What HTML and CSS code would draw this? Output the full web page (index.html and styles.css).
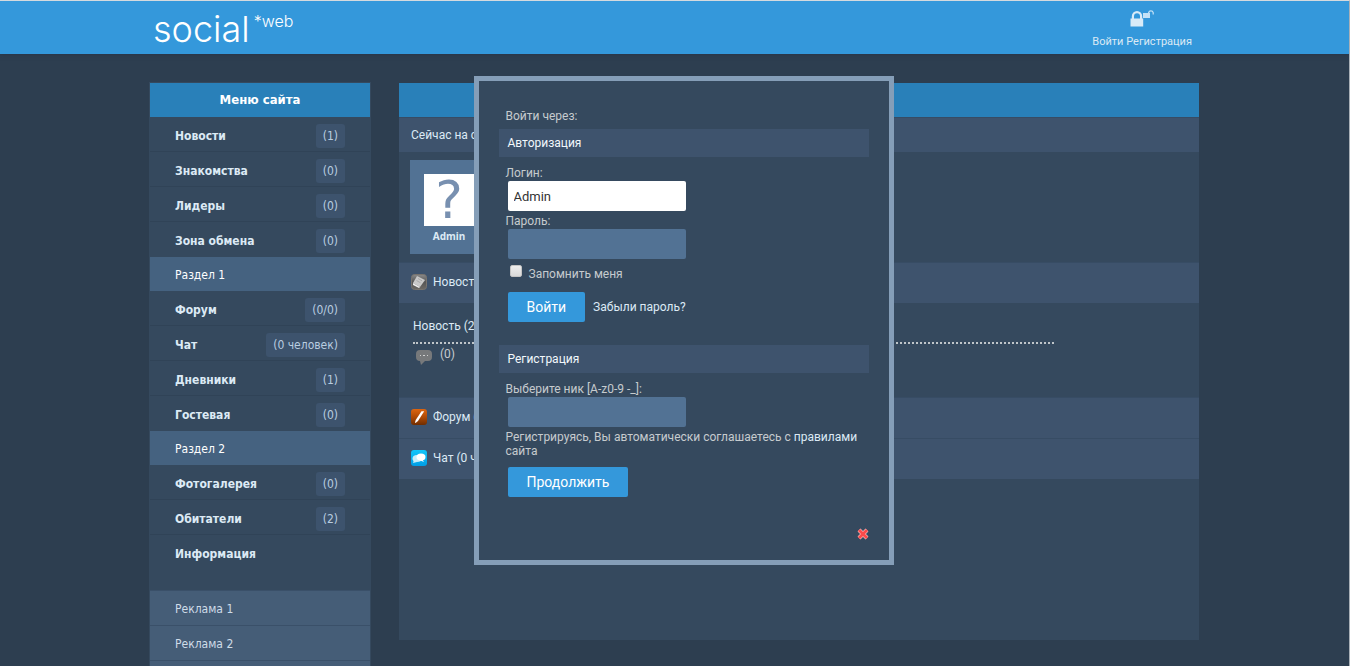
FILE: index.html
```html
<!DOCTYPE html>
<html lang="ru">
<head>
<meta charset="utf-8">
<title>social*web</title>
<link rel="stylesheet" href="styles.css">
</head>
<body class="page">
<header class="topbar">
  <div class="wrap topbar-inner">
    <a class="logo" href="#"><span class="logo-main">social</span><span class="logo-sub">*web</span></a>
    <nav class="account">
      <svg class="locks" width="24" height="20" viewBox="0 0 24 20" aria-hidden="true">
        <path d="M0.500 9.500h1.300V7.200a5.200 5.200 0 0 1 10.400 0v2.300h1v8H.5zM4 9.500h6V7.200a3 3 0 0 0-6 0z" fill="#d9ebf8" fill-rule="evenodd"/>
        <path d="M13 4h5V3.600a3 3 0 0 1 5.800 0v1.900h-1.200V3.800a1.700 1.700 0 0 0-3.300 0V4h.7v5h-7z" fill="#c4e2f7"/>
      </svg>
      <span><a href="#">Войти</a> <a href="#">Регистрация</a></span>
    </nav>
  </div>
</header>
<div class="wrap layout">
  <aside class="sidebar">
    <h2 class="side-title">Меню сайта</h2>
    <ul class="menu">
      <li><a href="#">Новости<span class="count">(1)</span></a></li>
      <li><a href="#">Знакомства<span class="count">(0)</span></a></li>
      <li><a href="#">Лидеры<span class="count">(0)</span></a></li>
      <li><a href="#">Зона обмена<span class="count">(0)</span></a></li>
    </ul>
    <h3 class="section">Раздел 1</h3>
    <ul class="menu">
      <li><a href="#">Форум<span class="count">(0/0)</span></a></li>
      <li><a href="#">Чат<span class="count">(0 человек)</span></a></li>
      <li><a href="#">Дневники<span class="count">(1)</span></a></li>
      <li><a href="#">Гостевая<span class="count">(0)</span></a></li>
    </ul>
    <h3 class="section">Раздел 2</h3>
    <ul class="menu">
      <li><a href="#">Фотогалерея<span class="count">(0)</span></a></li>
      <li><a href="#">Обитатели<span class="count">(2)</span></a></li>
      <li><a href="#">Информация</a></li>
    </ul>
    <ul class="ads">
      <li><a href="#">Реклама 1</a></li>
      <li><a href="#">Реклама 2</a></li>
      <li></li>
    </ul>
  </aside>
  <main class="content">
    <div class="content-head"></div>
    <div class="bar bar-online">Сейчас на сайте</div>
    <div class="online">
      <a class="user" href="#"><span class="avatar">?</span>Admin</a>
    </div>
    <a class="bar" href="#">
      <svg width="16" height="16" viewBox="0 0 16 16" aria-hidden="true">
        <defs><linearGradient id="g1" x2="0" y2="1"><stop stop-color="#8a8a8a"/><stop offset=".5" stop-color="#555"/><stop offset="1" stop-color="#6d6a66"/></linearGradient></defs>
        <rect x=".5" y=".5" width="15" height="15" rx="3" fill="url(#g1)" stroke="#77736e"/>
        <path d="M6 2l8 4-5 7-7-4z" fill="#c9c9c9"/><path d="M7 4.500l4 2.300M5.500 6.500l4 2.300" stroke="#aaa"/><path d="M2 9l7 4-1 1-6-3z" fill="#eee"/>
      </svg>Новости</a>
    <article class="news">
      <a class="news-title" href="#">Новость (2014)</a>
      <a class="comments" href="#">
        <svg width="16" height="15" viewBox="0 0 16 15" aria-hidden="true"><path d="M4 0h8q4 0 4 4v3q0 4-4 4H9l-4 4-1-4Q0 11 0 7V4q0-4 4-4z" fill="#77797b"/><path d="M4 5h1v1H4zM7 5h2v1H7zM11 5h1v1h-1z" fill="#d0d0d0"/></svg>
        (0)</a>
    </article>
    <a class="bar" href="#">
      <svg width="16" height="16" viewBox="0 0 16 16" aria-hidden="true">
        <defs><linearGradient id="g2" x2="0" y2="1"><stop stop-color="#dd6510"/><stop offset=".5" stop-color="#b04a05"/><stop offset="1" stop-color="#6f2d00"/></linearGradient></defs>
        <rect width="16" height="16" rx="3" fill="url(#g2)"/>
        <path d="M10.500 2.200h2.700L7 12l-2.500 2-.5-.5.700-2.500z" fill="#fff"/>
      </svg>Форум (0/0)</a>
    <a class="bar" href="#">
      <svg width="16" height="16" viewBox="0 0 16 16" aria-hidden="true">
        <defs><linearGradient id="g3" x2="0" y2="1"><stop stop-color="#12c6fa"/><stop offset="1" stop-color="#009ee5"/></linearGradient></defs>
        <rect width="16" height="16" rx="3" fill="url(#g3)"/>
        <ellipse cx="6" cy="8.500" rx="4.500" ry="3.500" fill="#c7eefa"/><path d="M3 10l-1 3 4-1z" fill="#c7eefa"/>
        <ellipse cx="10" cy="7" rx="4.500" ry="3.500" fill="#fff"/><path d="M11 9l2 3-5-2z" fill="#fff"/>
      </svg>Чат (0 человек)</a>
  </main>
</div>
<section class="dialog" role="dialog" aria-label="Авторизация">
  <p class="line via">Войти через:</p>
  <h2 class="dialog-bar">Авторизация</h2>
  <form class="form login-form">
    <label class="line" for="login">Логин:</label>
    <input class="field field-active" id="login" type="text" value="Admin">
    <label class="line" for="password">Пароль:</label>
    <input class="field" id="password" type="password">
    <div class="remember"><input class="check" id="remember" type="checkbox"><label for="remember">Запомнить меня</label></div>
    <div class="actions"><button class="btn" type="button">Войти</button><a href="#">Забыли пароль?</a></div>
  </form>
  <h2 class="dialog-bar">Регистрация</h2>
  <form class="form">
    <label class="line" for="nick">Выберите ник [A-z0-9 -_]:</label>
    <input class="field" id="nick" type="text">
    <p class="rules">Регистрируясь, Вы автоматически соглашаетесь с <a href="#">правилами</a> сайта</p>
    <button class="btn btn-next" type="button">Продолжить</button>
  </form>
  <button class="close" type="button" aria-label="Закрыть">
    <svg width="12" height="12" viewBox="0 0 12 12" aria-hidden="true"><path d="M2 2l8 8M10 2l-8 8" stroke="#ffc9c9" stroke-width="4"/><path d="M2 2l8 8M10 2l-8 8" stroke="#fb4b4b" stroke-width="3"/></svg>
  </button>
</section>
</body>
</html>
```
FILE: styles.css
```css
* { box-sizing: border-box; }
.page {
  position: relative;
  margin: 0;
  height: 100vh;
  overflow: hidden;
  background: #2d3e50;
  border-top: 1px solid #d5dade;
  border-right: 1px solid #a9b0b7;
  font: 12px/14px Roboto, "Noto Sans", sans-serif;
  color: #c6cbce;
}
a { color: #dceaf5; text-decoration: none; }
h2, h3, p, ul { margin: 0; padding: 0; }
ul { list-style: none; }
.wrap { max-width: 1051px; margin: 0 auto; padding-right: 1px; }
.topbar { background: #3498db; box-shadow: 0 1px 4px #24324299; }
.topbar-inner { height: 53px; display: flex; justify-content: space-between; }
.logo { display: flex; align-items: flex-start; gap: 4px; padding: 7px 0 0 4px; color: #fff; font-family: Inter, sans-serif; font-weight: 300; }
.logo-main { font-size: 36px; line-height: 42px; }
.logo-sub { font-size: 16px; line-height: 26px; }
.account { display: flex; flex-direction: column; align-items: center; gap: 6px; padding: 8px 7px 0 0; font-size: 11px; }
.locks { display: block; }
.layout { display: grid; grid-template-columns: 222px 1fr; column-gap: 28px; align-items: start; padding-top: 28px; }

.sidebar { padding: 0 1px; background: #35495e; border-top: 1px solid #35495e; font-family: "DejaVu Sans Condensed", "DejaVu Sans", sans-serif; font-stretch: condensed; }
.side-title { background: #2980b9; color: #fff; text-align: center; font-size: 13px; line-height: 34px; }
.menu li { height: 35px; border-bottom: 1px solid #304357; }
.menu li:last-child { border-bottom-color: transparent; }
.menu a { display: flex; align-items: center; justify-content: space-between; height: 36px; padding: 1px 25px 0; font-weight: bold; }
.count { padding: 0 7px; line-height: 24px; border-radius: 3px; background: #3d536d; color: #b9cde0; font-weight: normal; }
.section { height: 34px; padding-left: 25px; background: #456280; color: #fff; font-weight: normal; font-size: 12px; line-height: 36px; }
.ads { margin-top: 20px; }
.ads li { height: 35px; padding-left: 25px; border-top: 1px solid #3a5069; background: #455d77; line-height: 36px; }
.ads a { color: #cfdce8; }

.content { margin-top: 1px; min-height: 557px; background: #35495e; }
.content-head { height: 34px; background: #2980b9; }
.bar { display: flex; align-items: center; gap: 6px; height: 41px; padding: 0 12px 2px; background: #3e536d; border-top: 1px solid #374c64; }
.bar-online { height: 35px; padding-bottom: 0; color: #dceaf5; }
.online { height: 110px; padding: 8px 11px; }
.user { display: flex; flex-direction: column; align-items: center; gap: 3px; width: 78px; height: 94px; padding-top: 14px; background: #527294; font-size: 10px; font-weight: bold; font-family: "Noto Sans", sans-serif; }
.avatar { width: 50px; height: 52px; background: #fff; color: #7890b0; text-align: center; font: 52px/52px "DejaVu Sans", sans-serif; }
.news { height: 94px; padding: 16px 14px; }
.news-title { display: block; width: 83%; padding-bottom: 9px; border-bottom: 2px dotted #bfc5c9; }
.comments { display: flex; gap: 8px; padding: 3px; color: #c6cbce; }
.comments svg { margin-top: 3px; }

.dialog { position: absolute; top: 75px; left: calc(50% - 200px - 1px); width: 420px; padding: 25px 20px 20px; border: 5px solid #859eb8; background: #35495e; }
.line { display: block; padding-left: 7px; line-height: 16px; }
.via { line-height: 20px; margin-bottom: 3px; }
.dialog-bar { padding-left: 9px; background: #3e536d; color: #f2f8fc; font-size: 12px; font-weight: 400; line-height: 28px; }
.form { padding-top: 8px; }
.login-form { padding-bottom: 23px; }
.field { display: block; width: 178px; height: 30px; margin: 0 0 2px 9px; padding: 0 6px; border: 0; border-radius: 2px; background: #527294; color: #fff; font: 13px Roboto, "Noto Sans", sans-serif; }
.field-active { background: #fff; color: #333; }
.remember { display: flex; gap: 7px; padding: 4px 0 0 11px; }
.check { appearance: none; width: 12px; height: 12px; margin: 0; border: 1px solid #c4c4c4; border-radius: 2px; background: linear-gradient(#eee, #d9d9d9); }
.remember label { padding-top: 2px; }
.actions { display: flex; align-items: center; gap: 8px; margin: 11px 0 0 9px; }
.btn { height: 30px; padding: 0 19px; border: 0; border-radius: 2px; background: #3498db; color: #fff; font: 14px Roboto, "Noto Sans", sans-serif; }
.rules { padding: 1px 4px 0 7px; }
.btn-next { margin: 9px 0 0 9px; }
.close { display: block; margin: 31px 0 0 auto; padding: 0; border: 0; background: none; line-height: 0; }
```
